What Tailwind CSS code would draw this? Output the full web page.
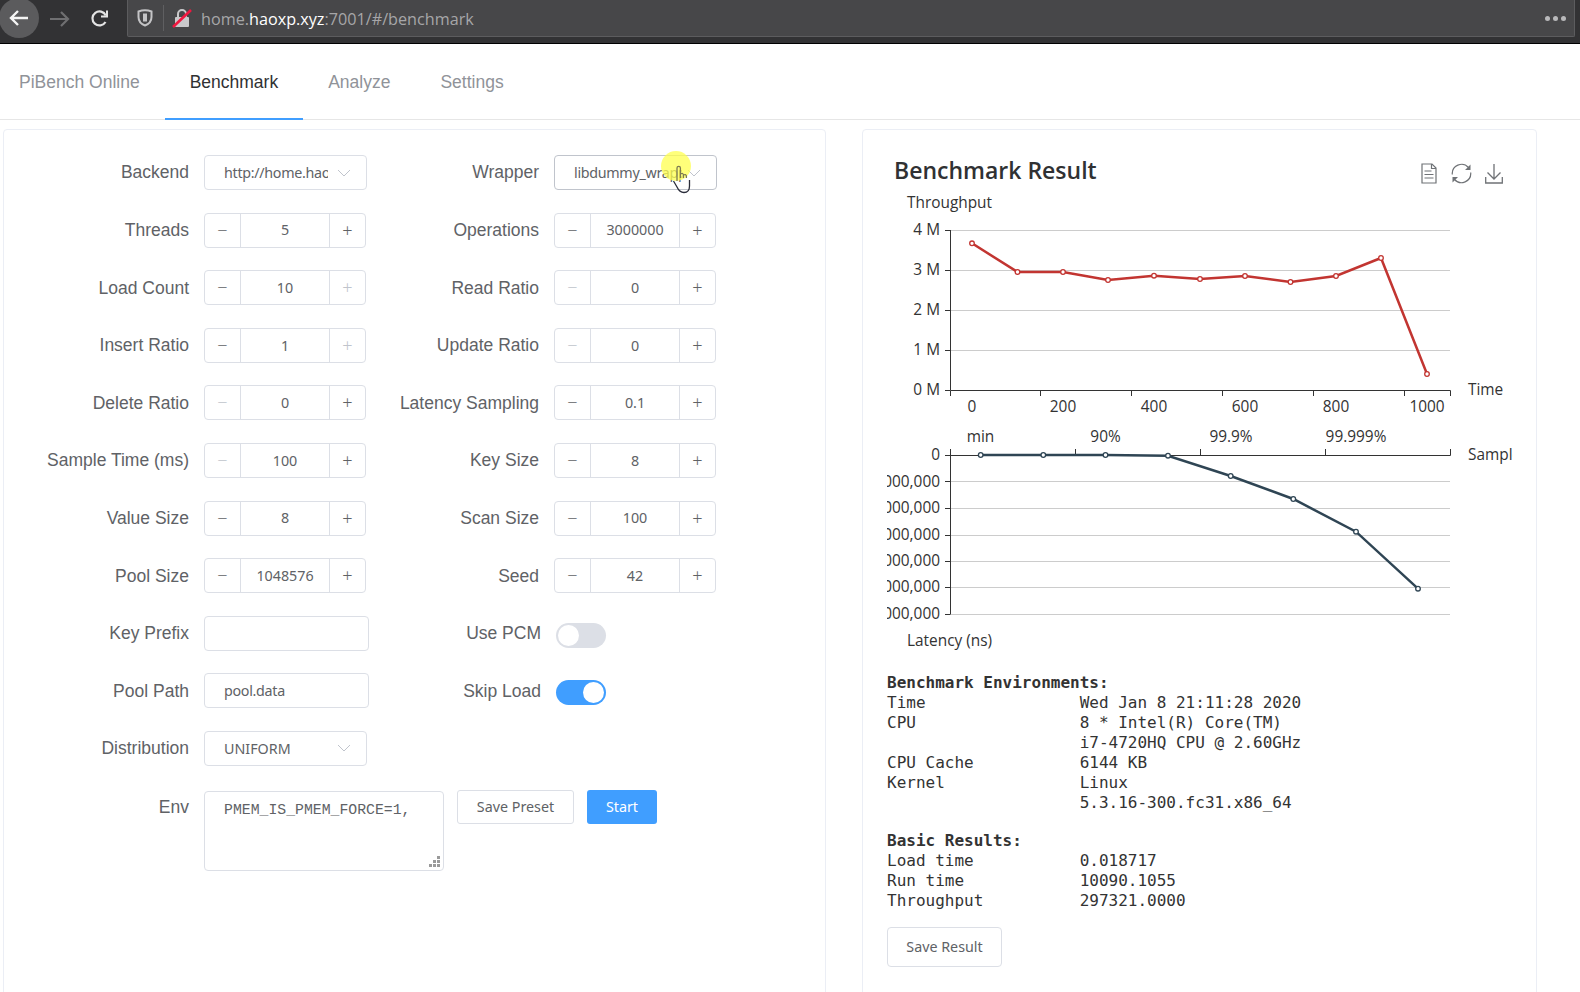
<!DOCTYPE html>
<html lang="en">
<head>
  <meta charset="UTF-8">
  <title>PiBench Online</title>
  <script src="https://cdn.jsdelivr.net/npm/@tailwindcss/browser@4"></script>
</head>
<body class="h-[992px] w-[1580px] overflow-hidden bg-white [font-family:'Liberation_Sans',sans-serif] text-[#606266]">

  <!-- browser toolbar -->
  <div class="flex h-[44px] items-start border-b border-black bg-[#323234]">
    <div class="flex h-[37px] w-[127px] shrink-0 items-center">
      <div class="-mt-[1px] -ml-[1px] flex h-[40px] w-[40px] items-center justify-center rounded-full bg-[#5b5b5d]">
        <svg width="22" height="20" viewBox="0 0 22 20" fill="none" stroke="#f4f4f4" stroke-width="2.4"><path d="M20 10H3M10 3l-7 7 7 7"/></svg>
      </div>
      <svg class="ml-[10px]" width="22" height="20" viewBox="0 0 22 20" fill="none" stroke="#6f6f71" stroke-width="2.2"><path d="M1 10h18M12 3l7 7-7 7"/></svg>
      <svg class="ml-[19px]" width="20" height="20" viewBox="0 0 20 20" fill="none" stroke="#e4e4e4" stroke-width="2.2"><path d="M15.5 13a7 7 0 1 1 .3-6.5"/><path d="M17 1.5v6h-6" stroke-width="2"/></svg>
    </div>
    <div class="flex h-[37px] w-[1448px] items-center rounded-b-[2px] border-x border-b border-[#5c5c5e] bg-[#474749]">
      <svg class="ml-[9px]" width="16" height="18" viewBox="0 0 16 18" fill="none" stroke="#c4c4c6" stroke-width="2"><path d="M1.5 2.5Q8 0 14.500 2.500V8q0 6-6.500 8.500Q1.500 14 1.500 8z"/><path d="M8 4.500v8" stroke-width="4"/></svg>
      <div class="ml-[10px] h-[26px] w-px bg-[#5f5f61]"></div>
      <svg class="ml-[8px]" width="20" height="20" viewBox="0 0 20 20" fill="none"><rect x="3" y="9" width="14" height="10" rx="1" fill="#c9c9cb"/><path d="M6 9V6a4 4 0 0 1 8 0v3" stroke="#c9c9cb" stroke-width="2"/><path d="M1 19 19 2" stroke="#f0173f" stroke-width="2.600"/></svg>
      <div class="mt-[2px] ml-[9px] [font-family:'Open_Sans',sans-serif] text-[16.2px] text-[#a6a6a8]">home.<span class="text-white">haoxp.xyz</span>:7001/#/benchmark</div>
      <div class="mr-[8px] ml-auto flex gap-[3px]">
        <span class="h-[5px] w-[5px] rounded-full bg-[#b9b9bb]"></span>
        <span class="h-[5px] w-[5px] rounded-full bg-[#b9b9bb]"></span>
        <span class="h-[5px] w-[5px] rounded-full bg-[#b9b9bb]"></span>
      </div>
    </div>
  </div>

  <!-- app menu -->
  <nav class="flex h-[76px] border-b border-[#e6e6e6] text-[17.5px] text-[#909399]">
    <a class="flex h-[76px] items-center pr-[25px] pl-[19px]">PiBench Online</a>
    <a class="flex h-[76px] items-center border-b-2 border-[#409eff] px-[25px] pt-[2px] text-[#303133]">Benchmark</a>
    <a class="flex h-[76px] items-center px-[25px]">Analyze</a>
    <a class="flex h-[76px] items-center px-[25px]">Settings</a>
  </nav>

  <main class="flex items-start pt-[9px] pl-[3px]">
    <!-- config form -->
    <section class="h-[900px] w-[823px] rounded-[4px] border border-[#ebeef5] pt-[25px] text-[17.5px]">
      <div class="grid grid-cols-[365px_350px] gap-y-[22.6px]">

        <div class="flex h-[35px] items-center"><label class="w-[185px] text-right">Backend</label>
          <div class="ml-[15px] flex h-[35px] w-[163px] items-center rounded-[4px] border border-[#dcdfe6] pr-[15px] pl-[19px] [font-family:'Noto_Sans',sans-serif] text-[14.3px]"><span class="w-[104px] overflow-hidden tracking-[-0.3px] whitespace-nowrap">http://home.haoxp.xyz:7001</span><svg class="ml-auto" width="14" height="8" viewBox="0 0 14 8" fill="none" stroke="#c0c4cc"><path d="M1 1l6 6 6-6"/></svg></div>
        </div>
        <div class="flex h-[35px] items-center"><label class="w-[170px] text-right">Wrapper</label>
          <div class="ml-[15px] flex h-[35px] w-[163px] items-center rounded-[4px] border border-[#c0c4cc] pr-[15px] pl-[19px] [font-family:'Noto_Sans',sans-serif] text-[14.3px]"><span class="w-[108px] overflow-hidden tracking-[-0.3px] whitespace-nowrap">libdummy_wrapper.so</span><svg class="ml-auto" width="14" height="8" viewBox="0 0 14 8" fill="none" stroke="#c0c4cc"><path d="M1 1l6 6 6-6"/></svg></div>
        </div>

        <div class="flex h-[35px] items-center"><label class="w-[185px] text-right">Threads</label>
          <div class="ml-[15px] flex h-[35px] w-[162px] items-center rounded-[4px] border border-[#dcdfe6] [font-family:'Noto_Sans',sans-serif] text-[14.3px]"><span class="flex h-full w-[36px] items-center justify-center border-r border-[#dcdfe6] text-[18px] font-light">−</span><span class="flex-1 text-center">5</span><span class="flex h-full w-[36px] items-center justify-center border-l border-[#dcdfe6] text-[18px] font-light">+</span></div>
        </div>
        <div class="flex h-[35px] items-center"><label class="w-[170px] text-right">Operations</label>
          <div class="ml-[15px] flex h-[35px] w-[162px] items-center rounded-[4px] border border-[#dcdfe6] [font-family:'Noto_Sans',sans-serif] text-[14.3px]"><span class="flex h-full w-[36px] items-center justify-center border-r border-[#dcdfe6] text-[18px] font-light">−</span><span class="flex-1 text-center">3000000</span><span class="flex h-full w-[36px] items-center justify-center border-l border-[#dcdfe6] text-[18px] font-light">+</span></div>
        </div>

        <div class="flex h-[35px] items-center"><label class="w-[185px] text-right">Load Count</label>
          <div class="ml-[15px] flex h-[35px] w-[162px] items-center rounded-[4px] border border-[#dcdfe6] [font-family:'Noto_Sans',sans-serif] text-[14.3px]"><span class="flex h-full w-[36px] items-center justify-center border-r border-[#dcdfe6] text-[18px] font-light">−</span><span class="flex-1 text-center">10</span><span class="flex h-full w-[36px] items-center justify-center border-l border-[#dcdfe6] text-[18px] font-light text-[#c0c4cc]">+</span></div>
        </div>
        <div class="flex h-[35px] items-center"><label class="w-[170px] text-right">Read Ratio</label>
          <div class="ml-[15px] flex h-[35px] w-[162px] items-center rounded-[4px] border border-[#dcdfe6] [font-family:'Noto_Sans',sans-serif] text-[14.3px]"><span class="flex h-full w-[36px] items-center justify-center border-r border-[#dcdfe6] text-[18px] font-light text-[#c0c4cc]">−</span><span class="flex-1 text-center">0</span><span class="flex h-full w-[36px] items-center justify-center border-l border-[#dcdfe6] text-[18px] font-light">+</span></div>
        </div>

        <div class="flex h-[35px] items-center"><label class="w-[185px] text-right">Insert Ratio</label>
          <div class="ml-[15px] flex h-[35px] w-[162px] items-center rounded-[4px] border border-[#dcdfe6] [font-family:'Noto_Sans',sans-serif] text-[14.3px]"><span class="flex h-full w-[36px] items-center justify-center border-r border-[#dcdfe6] text-[18px] font-light">−</span><span class="flex-1 text-center">1</span><span class="flex h-full w-[36px] items-center justify-center border-l border-[#dcdfe6] text-[18px] font-light text-[#c0c4cc]">+</span></div>
        </div>
        <div class="flex h-[35px] items-center"><label class="w-[170px] text-right">Update Ratio</label>
          <div class="ml-[15px] flex h-[35px] w-[162px] items-center rounded-[4px] border border-[#dcdfe6] [font-family:'Noto_Sans',sans-serif] text-[14.3px]"><span class="flex h-full w-[36px] items-center justify-center border-r border-[#dcdfe6] text-[18px] font-light text-[#c0c4cc]">−</span><span class="flex-1 text-center">0</span><span class="flex h-full w-[36px] items-center justify-center border-l border-[#dcdfe6] text-[18px] font-light">+</span></div>
        </div>

        <div class="flex h-[35px] items-center"><label class="w-[185px] text-right">Delete Ratio</label>
          <div class="ml-[15px] flex h-[35px] w-[162px] items-center rounded-[4px] border border-[#dcdfe6] [font-family:'Noto_Sans',sans-serif] text-[14.3px]"><span class="flex h-full w-[36px] items-center justify-center border-r border-[#dcdfe6] text-[18px] font-light text-[#c0c4cc]">−</span><span class="flex-1 text-center">0</span><span class="flex h-full w-[36px] items-center justify-center border-l border-[#dcdfe6] text-[18px] font-light">+</span></div>
        </div>
        <div class="flex h-[35px] items-center"><label class="w-[170px] text-right">Latency Sampling</label>
          <div class="ml-[15px] flex h-[35px] w-[162px] items-center rounded-[4px] border border-[#dcdfe6] [font-family:'Noto_Sans',sans-serif] text-[14.3px]"><span class="flex h-full w-[36px] items-center justify-center border-r border-[#dcdfe6] text-[18px] font-light">−</span><span class="flex-1 text-center">0.1</span><span class="flex h-full w-[36px] items-center justify-center border-l border-[#dcdfe6] text-[18px] font-light">+</span></div>
        </div>

        <div class="flex h-[35px] items-center"><label class="w-[185px] text-right">Sample Time (ms)</label>
          <div class="ml-[15px] flex h-[35px] w-[162px] items-center rounded-[4px] border border-[#dcdfe6] [font-family:'Noto_Sans',sans-serif] text-[14.3px]"><span class="flex h-full w-[36px] items-center justify-center border-r border-[#dcdfe6] text-[18px] font-light text-[#c0c4cc]">−</span><span class="flex-1 text-center">100</span><span class="flex h-full w-[36px] items-center justify-center border-l border-[#dcdfe6] text-[18px] font-light">+</span></div>
        </div>
        <div class="flex h-[35px] items-center"><label class="w-[170px] text-right">Key Size</label>
          <div class="ml-[15px] flex h-[35px] w-[162px] items-center rounded-[4px] border border-[#dcdfe6] [font-family:'Noto_Sans',sans-serif] text-[14.3px]"><span class="flex h-full w-[36px] items-center justify-center border-r border-[#dcdfe6] text-[18px] font-light">−</span><span class="flex-1 text-center">8</span><span class="flex h-full w-[36px] items-center justify-center border-l border-[#dcdfe6] text-[18px] font-light">+</span></div>
        </div>

        <div class="flex h-[35px] items-center"><label class="w-[185px] text-right">Value Size</label>
          <div class="ml-[15px] flex h-[35px] w-[162px] items-center rounded-[4px] border border-[#dcdfe6] [font-family:'Noto_Sans',sans-serif] text-[14.3px]"><span class="flex h-full w-[36px] items-center justify-center border-r border-[#dcdfe6] text-[18px] font-light">−</span><span class="flex-1 text-center">8</span><span class="flex h-full w-[36px] items-center justify-center border-l border-[#dcdfe6] text-[18px] font-light">+</span></div>
        </div>
        <div class="flex h-[35px] items-center"><label class="w-[170px] text-right">Scan Size</label>
          <div class="ml-[15px] flex h-[35px] w-[162px] items-center rounded-[4px] border border-[#dcdfe6] [font-family:'Noto_Sans',sans-serif] text-[14.3px]"><span class="flex h-full w-[36px] items-center justify-center border-r border-[#dcdfe6] text-[18px] font-light">−</span><span class="flex-1 text-center">100</span><span class="flex h-full w-[36px] items-center justify-center border-l border-[#dcdfe6] text-[18px] font-light">+</span></div>
        </div>

        <div class="flex h-[35px] items-center"><label class="w-[185px] text-right">Pool Size</label>
          <div class="ml-[15px] flex h-[35px] w-[162px] items-center rounded-[4px] border border-[#dcdfe6] [font-family:'Noto_Sans',sans-serif] text-[14.3px]"><span class="flex h-full w-[36px] items-center justify-center border-r border-[#dcdfe6] text-[18px] font-light">−</span><span class="flex-1 text-center">1048576</span><span class="flex h-full w-[36px] items-center justify-center border-l border-[#dcdfe6] text-[18px] font-light">+</span></div>
        </div>
        <div class="flex h-[35px] items-center"><label class="w-[170px] text-right">Seed</label>
          <div class="ml-[15px] flex h-[35px] w-[162px] items-center rounded-[4px] border border-[#dcdfe6] [font-family:'Noto_Sans',sans-serif] text-[14.3px]"><span class="flex h-full w-[36px] items-center justify-center border-r border-[#dcdfe6] text-[18px] font-light">−</span><span class="flex-1 text-center">42</span><span class="flex h-full w-[36px] items-center justify-center border-l border-[#dcdfe6] text-[18px] font-light">+</span></div>
        </div>

        <div class="flex h-[35px] items-center"><label class="w-[185px] text-right">Key Prefix</label>
          <div class="ml-[15px] h-[35px] w-[165px] rounded-[4px] border border-[#dcdfe6]"></div>
        </div>
        <div class="flex h-[35px] items-center"><label class="w-[172px] text-right">Use PCM</label>
          <div class="mt-[4px] ml-[15px] flex h-[25px] w-[50px] items-center rounded-full bg-[#dcdfe6] px-[2px]"><span class="h-[21px] w-[21px] rounded-full bg-white"></span></div>
        </div>

        <div class="flex h-[35px] items-center"><label class="w-[185px] text-right">Pool Path</label>
          <div class="ml-[15px] flex h-[35px] w-[165px] items-center rounded-[4px] border border-[#dcdfe6] pl-[19px] [font-family:'Noto_Sans',sans-serif] text-[14.3px] tracking-[-0.3px]">pool.data</div>
        </div>
        <div class="flex h-[35px] items-center"><label class="w-[172px] text-right">Skip Load</label>
          <div class="mt-[4px] ml-[15px] flex h-[25px] w-[50px] items-center justify-end rounded-full bg-[#409eff] px-[2px]"><span class="h-[21px] w-[21px] rounded-full bg-white"></span></div>
        </div>

        <div class="flex h-[35px] items-center"><label class="w-[185px] text-right">Distribution</label>
          <div class="ml-[15px] flex h-[35px] w-[163px] items-center rounded-[4px] border border-[#dcdfe6] pr-[15px] pl-[19px] [font-family:'Noto_Sans',sans-serif] text-[14.3px]"><span>UNIFORM</span><svg class="ml-auto" width="14" height="8" viewBox="0 0 14 8" fill="none" stroke="#c0c4cc"><path d="M1 1l6 6 6-6"/></svg></div>
        </div>
        <div></div>

        <div class="col-span-2 mt-px flex items-start">
          <label class="w-[185px] pt-[4px] text-right">Env</label>
          <div class="relative mt-px ml-[15px] h-[80px] w-[240px] rounded-[4px] border border-[#dcdfe6] pt-[7px] pl-[19px] [font-family:'Liberation_Mono',monospace] text-[14.8px]">PMEM_IS_PMEM_FORCE=1,
            <svg class="absolute right-[2px] bottom-[2px]" width="12" height="12" viewBox="0 0 12 12" fill="#9a9a9a"><rect x="8" y="0" width="3" height="3"/><rect x="4" y="4" width="3" height="3"/><rect x="8" y="4" width="3" height="3"/><rect x="0" y="8" width="3" height="3"/><rect x="4" y="8" width="3" height="3"/><rect x="8" y="8" width="3" height="3"/></svg>
          </div>
          <button class="ml-[13px] h-[34px] w-[117px] rounded-[3px] border border-[#dcdfe6] [font-family:'Noto_Sans',sans-serif] text-[14.3px]">Save Preset</button>
          <button class="ml-[13px] h-[34px] w-[70px] rounded-[3px] bg-[#409eff] [font-family:'Noto_Sans',sans-serif] text-[14.3px] text-white">Start</button>
        </div>
      </div>
    </section>

    <!-- result panel -->
    <section class="ml-[36px] h-[900px] w-[675px] rounded-[4px] border border-[#ebeef5]">
      <header class="flex h-[60px] items-center pt-[20px] pl-[31px]">
        <h2 class="[font-family:'Open_Sans',sans-serif] text-[23px] font-semibold text-[#303133]">Benchmark Result</h2>
        <div class="mt-[6px] ml-auto flex items-center pr-[33px]">
          <svg width="16" height="21" viewBox="0 0 16 21" fill="none" stroke="#6f7276" stroke-width="1.2"><path d="M1 1h10l4 4v15H1z"/><path d="M10.500 1v4.500H15M3.500 8h7M3.500 11.500h9M3.500 15h9"/></svg>
          <svg class="ml-[14px]" width="21" height="21" viewBox="0 0 21 21" fill="none" stroke="#6f7276" stroke-width="1.2"><path d="M1.300 11.500A9.300 9.300 0 0 1 17.500 4.500M19.700 9.500A9.300 9.300 0 0 1 3.500 16.500"/><path d="M19.500 1.500v5.500h-5.500zM1.500 19.500v-5.500h5.500z" fill="#6f7276" stroke="none"/></svg>
          <svg class="ml-[13px]" width="18" height="21" viewBox="0 0 18 21" fill="none" stroke="#6f7276" stroke-width="1.300"><path d="M9 1v15M2.500 9.500 9 16l6.500-6.500M.7 14v6h16.600v-6"/></svg>
        </div>
      </header>

      <svg width="673" height="470" viewBox="863 190 673 470" class="block [font-family:'Open_Sans',sans-serif] text-[15.4px]" fill="#333">
        <defs><clipPath id="labels"><rect x="887" y="440" width="626" height="200"/></clipPath></defs>

        <!-- throughput -->
        <text x="907" y="208">Throughput</text>
        <g stroke="#ccc"><path d="M950 230.500H1450M950 270.500H1450M950 310.500H1450M950 350.500H1450"/></g>
        <g stroke="#333" fill="none"><path d="M950.500 230V390.500H1450.500V396M950.500 390.500V396M1040.500 390.500V396M1131.500 390.500V396M1222.500 390.500V396M1313.500 390.500V396M1404.500 390.500V396M945 230.500H950M945 270.500H950M945 310.500H950M945 350.500H950M945 390.500H950"/></g>
        <g text-anchor="end"><text x="940" y="235">4 M</text><text x="940" y="275">3 M</text><text x="940" y="315">2 M</text><text x="940" y="355">1 M</text><text x="940" y="395">0 M</text></g>
        <g text-anchor="middle"><text x="972" y="412">0</text><text x="1063" y="412">200</text><text x="1154" y="412">400</text><text x="1245" y="412">600</text><text x="1336" y="412">800</text><text x="1427" y="412">1000</text></g>
        <text x="1468" y="395">Time</text>
        <polyline fill="none" stroke="#c23531" stroke-width="2.500" points="972,243.300 1017.500,272 1063,272 1108,280 1154,275.700 1200,279 1245,276 1290.500,282 1336,276 1381,258 1427,374"/>
        <g fill="#fff" stroke="#c23531" stroke-width="1.300"><circle cx="972" cy="243.300" r="2.300"/><circle cx="1017.500" cy="272" r="2.300"/><circle cx="1063" cy="272" r="2.300"/><circle cx="1108" cy="280" r="2.300"/><circle cx="1154" cy="275.700" r="2.300"/><circle cx="1200" cy="279" r="2.300"/><circle cx="1245" cy="276" r="2.300"/><circle cx="1290.500" cy="282" r="2.300"/><circle cx="1336" cy="276" r="2.300"/><circle cx="1381" cy="258" r="2.300"/><circle cx="1427" cy="374" r="2.300"/></g>

        <!-- latency -->
        <g text-anchor="middle"><text x="980.500" y="442">min</text><text x="1105.500" y="442">90%</text><text x="1231" y="442">99.9%</text><text x="1356" y="442">99.999%</text></g>
        <g stroke="#ccc"><path d="M950 481.500H1450M950 508.500H1450M950 535.500H1450M950 561.500H1450M950 587.500H1450M950 614.500H1450"/></g>
        <g stroke="#333" fill="none"><path d="M950.500 449V614.500M950.500 455.500H1450.500V449M1075.500 455.500V449M1200.500 455.500V449M1325.500 455.500V449M945 455.500H950M945 481.500H950M945 508.500H950M945 535.500H950M945 561.500H950M945 587.500H950M945 614.500H950"/></g>
        <g clip-path="url(#labels)" text-anchor="end"><text x="940" y="460">0</text><text x="940" y="487">1,000,000</text><text x="940" y="513">2,000,000</text><text x="940" y="540">3,000,000</text><text x="940" y="566">4,000,000</text><text x="940" y="592">5,000,000</text><text x="940" y="619">6,000,000</text></g>
        <g clip-path="url(#labels)"><text x="1468" y="460">Sample</text></g>
        <text x="907" y="646">Latency (ns)</text>
        <polyline fill="none" stroke="#2f4554" stroke-width="2.500" points="980.700,455 1043.300,455 1105.500,455 1168,455.700 1230.700,476 1293.300,499 1356,531.700 1418,588.700"/>
        <g fill="#fff" stroke="#2f4554" stroke-width="1.300"><circle cx="980.700" cy="455" r="2.300"/><circle cx="1043.300" cy="455" r="2.300"/><circle cx="1105.500" cy="455" r="2.300"/><circle cx="1168" cy="455.700" r="2.300"/><circle cx="1230.700" cy="476" r="2.300"/><circle cx="1293.300" cy="499" r="2.300"/><circle cx="1356" cy="531.700" r="2.300"/><circle cx="1418" cy="588.700" r="2.300"/></g>
      </svg>

      <div class="mt-[13px] pl-[24px] [font-family:'DejaVu_Sans_Mono',monospace] text-[16px] leading-[20px] text-[#333]">
        <pre class="[font-family:inherit]"><b>Benchmark Environments:</b>
Time                Wed Jan 8 21:11:28 2020
CPU                 8 * Intel(R) Core(TM)
                    i7-4720HQ CPU @ 2.60GHz
CPU Cache           6144 KB
Kernel              Linux
                    5.3.16-300.fc31.x86_64</pre>
        <pre class="mt-[18px] [font-family:inherit]"><b>Basic Results:</b>
Load time           0.018717
Run time            10090.1055
Throughput          297321.0000</pre>
        <button class="mt-[16px] h-[40px] w-[115px] rounded-[4px] border border-[#dcdfe6] [font-family:'Noto_Sans',sans-serif] text-[14.3px] text-[#606266]">Save Result</button>
      </div>
    </section>
  </main>

  <!-- recorded mouse pointer, sits over the wrapper select -->
  <div class="absolute top-[151px] left-[661px] h-[30px] w-[30px] rounded-full bg-[#ffff4d]/75"></div>
  <svg class="absolute top-[164px] left-[672px]" width="19" height="30" viewBox="0 0 19 30" fill="none" stroke="#2a2d3a" stroke-width="1.300"><path d="M1.500 17 5 23q2.500 5.500 7 5.500 5.500 0 5.500-6.500V16"/><path d="M5 17V4a1.700 1.700 0 0 1 3.400 0v10M8.400 10q2.700-1.500 3 1v3M11.400 11q2.500-1.200 3 1v2" stroke="#7d7a52"/></svg>
</body>
</html>
